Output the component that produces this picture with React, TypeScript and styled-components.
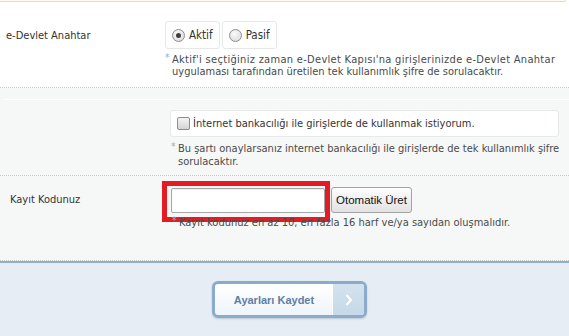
import styled, { createGlobalStyle } from 'styled-components';

const GlobalStyle = createGlobalStyle`
  html, body {
    margin: 0;
    padding: 0;
    background: #e6edf5;
  }
  body {
    font-family: 'DejaVu Sans Condensed', 'Liberation Sans', Arial, sans-serif;
    font-size: 11px;
    color: #333;
  }
`;

const Page = styled.div`
  width: 569px;
  height: 336px;
  overflow: hidden;
  background: #fff;
`;

const Notice = styled.div`
  width: 565px;
  height: 1px;
  background: #fffcef;
  border-right: 1px solid #f3dc8f;
  border-bottom: 1px solid #f3dc8f;
  border-radius: 0 0 5px 0;
`;

const Section = styled.div<{ $gray?: boolean }>`
  background: ${p => (p.$gray ? '#f6f8f8' : '#fff')};
  border-bottom: 1px dotted #c4c8c8;
`;

const Row = styled.div<{ $label: number; $pad: string }>`
  display: grid;
  grid-template-columns: ${p => p.$label}px 1fr;
  padding: ${p => p.$pad};
`;

const Label = styled.div<{ $h: number }>`
  height: ${p => p.$h}px;
  display: flex;
  align-items: center;
  font-size: 11px;
  color: #333;
`;

const Field = styled.div`
  display: flex;
  flex-direction: column;
  align-items: flex-start;
`;

const RadioGroup = styled.div`
  display: flex;
  gap: 2px;
`;

const RadioBox = styled.label`
  display: flex;
  align-items: center;
  gap: 4px;
  height: 26px;
  padding: 0 6px 0 6px;
  background: #fff;
  border: 1px solid #e6e8e8;
  border-radius: 3px;
  font-size: 11.5px;
  color: #333;
`;

const RadioDot = styled.span<{ $on?: boolean }>`
  width: 11px;
  height: 11px;
  border-radius: 50%;
  border: 1px solid #8d8d8d;
  background: radial-gradient(circle at 40% 35%, #fafafa, #d6d6d6);
  display: flex;
  align-items: center;
  justify-content: center;

  &::after {
    content: '';
    width: 5px;
    height: 5px;
    border-radius: 50%;
    background: ${p => (p.$on ? '#3f3f3f' : 'transparent')};
  }
`;

const Hint = styled.div<{ $top: number; $shift?: number; $lh?: number }>`
  position: relative;
  margin-top: ${p => p.$top}px;
  margin-left: ${p => p.$shift || 0}px;
  padding-left: 7px;
  line-height: ${p => p.$lh || 12}px;
  color: #4a4a4a;
  white-space: nowrap;

  &::before {
    content: '*';
    position: absolute;
    left: 0;
    top: -2px;
    font-size: 10px;
    color: #8fb1cf;
  }
`;

const HintLine = styled.span<{ $spread?: number }>`
  letter-spacing: ${p => p.$spread || 0}px;
`;

const Spacer = styled.div`
  height: 11px;
`;

const Inner = styled.div`
  margin-left: 5px;
  border-top: 1px solid #fff;
  padding: 10px 10px 7px 165px;
`;

const CheckBox = styled.label`
  display: flex;
  align-items: center;
  gap: 3px;
  height: 25px;
  padding-left: 6px;
  background: #fff;
  border: 1px solid #e6eaea;
  border-radius: 3px;
  color: #333;
`;

const Tick = styled.span`
  width: 11px;
  height: 11px;
  border: 1px solid #8d8d8d;
  border-radius: 2px;
  background: linear-gradient(#f4f4f4, #d4d4d4);
`;

const InputLine = styled.div`
  display: flex;
  align-items: center;
  gap: 6px;
`;

const InputWrap = styled.div`
  position: relative;
`;

const CodeInput = styled.input`
  display: block;
  box-sizing: border-box;
  width: 154px;
  height: 25px;
  margin: 0;
  border: 1px solid #a6a6a6;
  border-radius: 2px;
  box-shadow: inset 0 1px 1px rgba(0, 0, 0, 0.08);
  background: #fff;
`;

const Highlight = styled.div`
  position: absolute;
  left: -9px;
  top: -7px;
  right: -5px;
  bottom: -9px;
  border: 5px solid #e31b23;
  pointer-events: none;
`;

const GrayButton = styled.button`
  box-sizing: border-box;
  width: 81px;
  height: 26px;
  padding: 0;
  border: 1px solid #a3a3a3;
  border-radius: 3px;
  background: linear-gradient(#fdfdfd, #e2e2e2);
  font-family: 'Liberation Sans', Arial, sans-serif;
  font-size: 11.5px;
  color: #111;
`;

const Footer = styled.div`
  border-top: 2px solid #8fb0cc;
  background: #e6edf5;
  height: 76px;
  padding: 18px 0 0 212px;
  box-sizing: border-box;
`;

const SaveButton = styled.button`
  display: flex;
  width: 155px;
  height: 37px;
  padding: 0;
  border: 3px solid #8aacca;
  border-radius: 6px;
  overflow: hidden;
  background: linear-gradient(#ffffff, #eef4fa);
  box-shadow: 0 1px 2px rgba(60, 90, 120, 0.25);
`;

const SaveText = styled.span`
  flex: 1;
  display: flex;
  align-items: center;
  justify-content: center;
  font-family: 'Liberation Sans', Arial, sans-serif;
  font-weight: bold;
  font-size: 11px;
  color: #5b80a6;
  padding-left: 1px;
`;

const Arrow = styled.span`
  width: 31px;
  border-left: 1px solid #fff;
  background: linear-gradient(#d3e2ee, #c6d9e8);
  display: flex;
  align-items: center;
  justify-content: center;
`;

export default function App() {
  return (
    <Page>
      <GlobalStyle />
      <Notice />

      <Section>
        <Row $label={159} $pad="19px 0 9px 6px">
          <Label $h={28}>e-Devlet Anahtar</Label>
          <Field>
            <RadioGroup>
              <RadioBox>
                <RadioDot $on />
                Aktif
              </RadioBox>
              <RadioBox>
                <RadioDot />
                Pasif
              </RadioBox>
            </RadioGroup>
            <Hint $top={5}>
              <HintLine $spread={0.3}>
                Aktif'i seçtiğiniz zaman e-Devlet Kapısı'na girişlerinizde e-Devlet Anahtar
              </HintLine>
              <br />
              uygulaması tarafından üretilen tek kullanımlık şifre de sorulacaktır.
            </Hint>
          </Field>
        </Row>
      </Section>

      <Section $gray>
        <Spacer />
        <Inner>
          <CheckBox>
            <Tick />
            İnternet bankacılığı ile girişlerde de kullanmak istiyorum.
          </CheckBox>
          <Hint $top={5} $shift={1} $lh={13}>
            Bu şartı onaylarsanız internet bankacılığı ile girişlerde de tek kullanımlık şifre
            <br />
            sorulacaktır.
          </Hint>
        </Inner>
      </Section>

      <Section $gray>
        <Row $label={161} $pad="11px 0 31px 10px">
          <Label $h={25}>Kayıt Kodunuz</Label>
          <Field>
            <InputLine>
              <InputWrap>
                <CodeInput type="text" />
                <Highlight />
              </InputWrap>
              <GrayButton type="button">Otomatik Üret</GrayButton>
            </InputLine>
            <Hint $top={4} $shift={1}>
              Kayıt kodunuz en az 10, en fazla 16 harf ve/ya sayıdan oluşmalıdır.
            </Hint>
          </Field>
        </Row>
      </Section>

      <Footer>
        <SaveButton type="button">
          <SaveText>Ayarları Kaydet</SaveText>
          <Arrow>
            <svg width="8" height="12" viewBox="0 0 8 12">
              <path d="M1.5 1 L6 6 L1.5 11" fill="none" stroke="#fff" strokeWidth="2" />
            </svg>
          </Arrow>
        </SaveButton>
      </Footer>
    </Page>
  );
}
